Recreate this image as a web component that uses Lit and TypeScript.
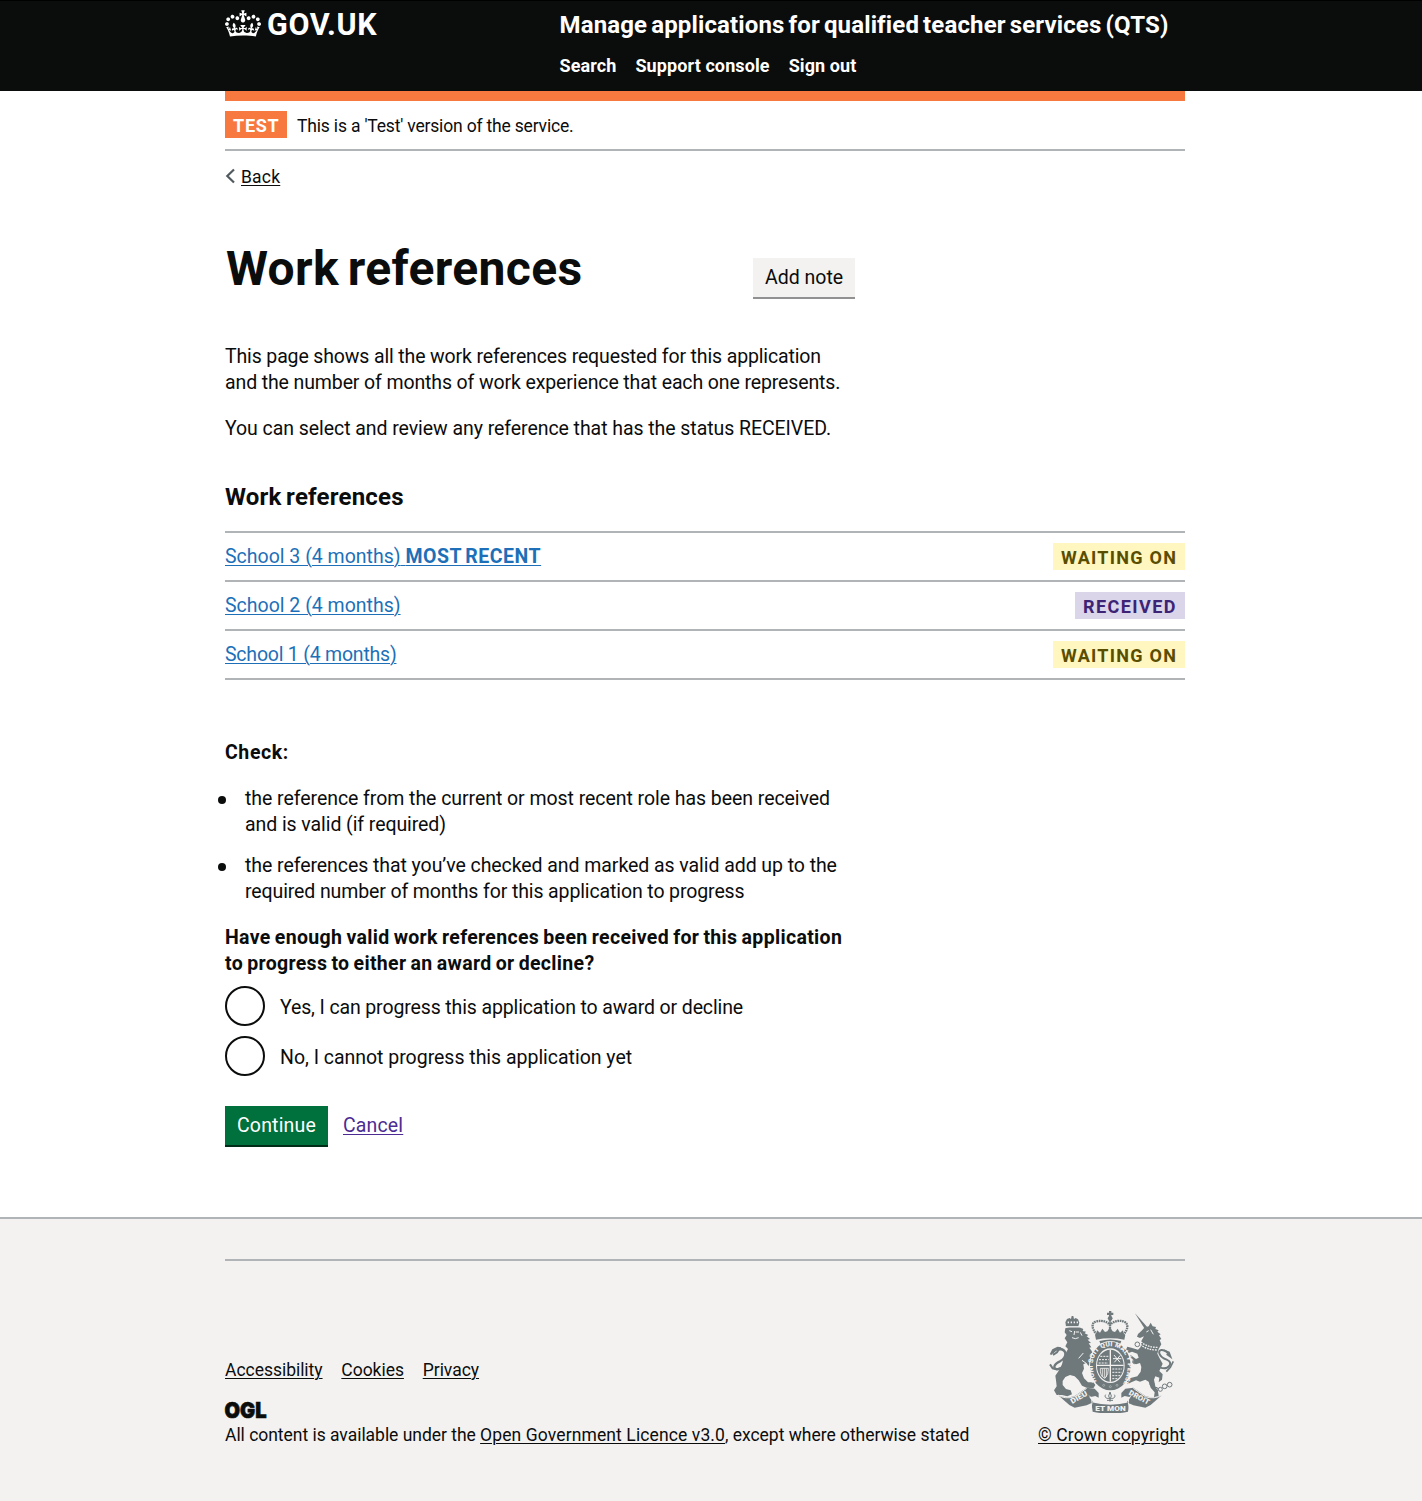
import { LitElement, html, svg, css } from "lit";
import { customElement } from "lit/decorators.js";

const crown = svg`<svg class="crown" viewBox="0 0 132 97" aria-hidden="true"><path fill="currentColor" fill-rule="evenodd" d="M25 30.2c3.5 1.5 7.7-.2 9.1-3.7 1.5-3.6-.2-7.8-3.9-9.2-3.6-1.4-7.6.3-9.1 3.9-1.4 3.5.3 7.5 3.9 9zM9 39.5c3.6 1.5 7.8-.2 9.2-3.7 1.5-3.6-.2-7.8-3.9-9.1-3.6-1.5-7.6.2-9.1 3.8-1.4 3.5.3 7.5 3.8 9zM4.4 57.2c3.5 1.5 7.7-.2 9.1-3.8 1.5-3.6-.2-7.7-3.9-9.1-3.5-1.5-7.6.3-9.1 3.8-1.4 3.5.3 7.6 3.9 9.1zm38.3-21.4c3.5 1.5 7.7-.2 9.1-3.8 1.5-3.6-.2-7.7-3.9-9.1-3.6-1.5-7.6.3-9.1 3.8-1.3 3.6.4 7.7 3.9 9.1zm64.4-5.6c-3.6 1.5-7.8-.2-9.1-3.7-1.5-3.6.2-7.8 3.8-9.2 3.6-1.4 7.7.3 9.2 3.9 1.3 3.5-.4 7.5-3.9 9zm15.9 9.3c-3.6 1.5-7.7-.2-9.1-3.7-1.5-3.6.2-7.8 3.7-9.1 3.6-1.5 7.7.2 9.2 3.8 1.5 3.5-.3 7.5-3.8 9zm4.7 17.7c-3.6 1.5-7.8-.2-9.2-3.8-1.5-3.6.2-7.7 3.9-9.1 3.6-1.5 7.7.3 9.2 3.8 1.3 3.5-.4 7.6-3.9 9.1zM89.3 35.8c-3.6 1.5-7.8-.2-9.2-3.8-1.4-3.6.2-7.7 3.9-9.1 3.6-1.5 7.7.3 9.2 3.8 1.4 3.6-.3 7.7-3.9 9.1zM69.7 17.7l8.9 4.7V9.3l-8.9 2.8c-.2-.3-.5-.6-.9-.9L72.4 0H59.6l3.5 11.2c-.3.3-.6.5-.9.9l-8.8-2.8v13.1l8.8-4.7c.3.3.6.7.9.9l-5 15.4v.1c-.2.8-.4 1.6-.4 2.4 0 4.1 3.1 7.5 7 8.1h.2c.3 0 .7.1 1 .1.4 0 .7 0 1-.1h.2c4-.6 7.1-4.1 7.1-8.1 0-.8-.1-1.7-.4-2.4V34l-5.1-15.4c.4-.2.7-.6 1-.9zM66 92.8c16.9 0 32.8 1.1 47.1 3.2 4-16.9 8.9-26.7 14-33.5l-9.6-3.4c1 4.9 1.1 7.2 0 10.2-1.5-1.4-3-4.3-4.2-8.7L108.6 76c2.8-2 5-3.2 7.5-3.3-4.4 9.4-10 11.9-13.6 11.2-4.3-.8-6.3-4.6-5.6-7.9 1-4.7 5.7-5.9 8-.5 4.3-8.7-3-11.4-7.6-8.8 7.1-7.2 7.9-13.5 2.1-21.1-8 6.1-8.1 12.3-4.5 20.8-4.7-5.4-12.1-2.5-9.5 6.2 3.4-5.2 7.9-2 7.2 3.1-.6 4.3-6.4 7.8-13.5 7.2-10.3-.9-10.9-8-11.2-13.8 2.5-.5 7.1 1.8 11 7.3L80.2 60c-4.1 4.4-8 5.3-12.3 5.4 1.4-4.4 8-11.6 8-11.6H55.5s6.4 7.2 7.9 11.6c-4.2-.1-8-1-12.3-5.4l1.4 16.4c3.9-5.5 8.5-7.7 10.9-7.3-.3 5.8-.9 12.8-11.1 13.8-7.2.6-12.9-2.9-13.5-7.2-.7-5 3.8-8.3 7.1-3.1 2.7-8.7-4.6-11.6-9.4-6.2 3.7-8.5 3.6-14.7-4.6-20.8-5.8 7.6-5 13.9 2.2 21.1-4.7-2.6-11.9.1-7.7 8.8 2.3-5.5 7.1-4.2 8.1.5.7 3.3-1.3 7.1-5.7 7.9-3.5.7-9-1.8-13.5-11.2 2.5.1 4.7 1.3 7.5 3.3l-4.7-15.4c-1.2 4.4-2.7 7.2-4.3 8.7-1.1-3-.9-5.3 0-10.2l-9.5 3.4c5 6.9 9.9 16.7 14 33.5 14.8-2.1 30.8-3.2 47.7-3.2z"/></svg>`;

const chevron = svg`<svg class="chevron" viewBox="0 0 12 16" aria-hidden="true"><path d="M9 1.5 2.300 8 9 14.500" fill="none" stroke="#505a5f" stroke-width="2.200"/></svg>`;

const arms = svg`<svg class="arms" viewBox="57 32 375 306" preserveAspectRatio="none" aria-hidden="true">
  <defs><path id="garter" d="M201 247C174 190 192 139 241 138C290 139 308 190 281 247"/></defs>
  <g class="ink">
    <path d="M237 32h7v5h6v7h-6v6h-7v-6h-6v-7h6z"/><circle cx="240.500" cy="54" r="7"/>
    <path d="M195 103q45-11 91 0l-3 15q-42-8-85 0z"/>
    <path d="M198 104l3-14 9 7 7-12 8 10 7-2 8-12 8 12 7 2 8-10 7 12 9-7 3 14z"/>
    <path d="M208 122q33-9 66 0l-3 8q-30-8-60 0z"/>
    <!-- lion -->
    <path d="M106 84L118 80L146 80L160 86L158 92L168 94L164 99L175 104L170 108L180 116L173 118L183 128L176 129L184 141L178 142L188 156L182 160L190 172L198 176L190 184L192 196L184 204L176 196L168 188L160 192L162 205L156 218L162 234L174 246L190 246L196 254L190 264L170 262L156 256L146 240L134 228L120 224L106 230L98 242L98 254L108 266L122 270L126 282L112 288L96 284L80 284L72 270L80 258L78 240L76 226L88 208L96 192L100 176L106 160L114 146L106 138L112 126L104 114L110 104L104 96z"/>
    <path d="M108 78l-2-12 5-10 8-3 4 3 2-9h5l2 9 5-3 7 4 4 10-3 11z"/>
    <!-- unicorn -->
    <path d="M315 39l36 40-7 6z"/>
    <path d="M343 82L356 78L362 67L368 78L378 80L376 86L386 90L382 94L392 102L387 105L394 116L389 119L394 132L386 146L382 160L390 176L398 190L392 204L388 212L398 222L396 238L386 246L388 232L376 228L372 238L376 258L384 272L386 288L372 290L374 276L362 262L356 244L346 238L330 244L318 240L304 246L292 252L289 244L302 233L322 228L332 214L334 200L330 188L318 192L308 186L312 180L300 172L302 164L318 176L326 172L322 160L306 154L296 158L288 148L292 139L304 142L324 148L332 140L334 122L342 108L330 113L321 109L324 101L334 92z"/>
    <!-- scroll -->
    <path d="M84 284q22 12 50 3l36-25 24 3 12 13 0 14-10-5-18 4 12 15-20 9-36 7-16-8-18-16z"/>
    <path d="M396 284q-22 12-50 3l-36-25-24 3-12 13 0 14 10-5 18 4-12 15 20 9 36 7 16-8 18-16z"/>
    <path d="M184 306q57 14 114 0l-4 28q-53 12-106 0z"/>
  </g>
  <g class="line">
    <path d="M201 103C184 85 183 66 200 63C219 59 233 65 240 74C249 63 268 58 282 64C297 70 294 88 280 103" stroke-width="7" stroke-dasharray="5 2"/>
    <path d="M240 59v34" stroke-width="7" stroke-dasharray="5 2"/>
    <path d="M92 206C61 210 73 190 90 183C113 171 111 146 87 146C74 147 69 153 67 160" stroke-width="7"/>
    <path d="M62 163l7-14 14-7 6 1-8 13-12 8M60 192l8 12 13 3 12-5" stroke-width="6"/>
    <path d="M391 202C417 210 432 186 410 178C388 170 381 151 394 149C406 148 415 158 418 166" stroke-width="6"/>
    <path d="M402 150l15 6 5 14-12-9M409 214l12-13 9-18" stroke-width="5"/>
    <g stroke-width="3"><circle cx="366" cy="251" r="6"/><circle cx="378" cy="267" r="6"/><circle cx="391" cy="267" r="6"/><circle cx="404" cy="258" r="7"/><circle cx="419" cy="253" r="7"/><circle cx="322" cy="132" r="7"/><circle cx="314" cy="184" r="6"/></g>
  </g>
  <ellipse cx="241" cy="197" rx="64" ry="75" class="gap"/>
  <ellipse cx="241" cy="197" rx="61" ry="73" class="ink"/>
  <ellipse cx="241" cy="196" rx="43" ry="52" class="gap"/>
  <ellipse cx="241" cy="196" rx="40" ry="48" class="ink"/>
  <g class="cut">
    <path d="M241 148v96M201 195h80" stroke-width="4"/>
    <path d="M211 168h25M207 178h29M206 188h28M247 206h29M247 216h28M247 226h24M247 235h16" stroke-width="3" stroke-dasharray="6 3"/>
    <path d="M252 164l18 22M271 165l-18 21M249 175h25" stroke-width="3"/>
    <path d="M211 204q-2 24 14 30 11-12 10-30zM217 205v24M223 205v27M229 205v25" stroke-width="2.500"/>
    <path d="M107 80h42" stroke-width="3"/><path d="M113 66h4M122 66h4M131 66h4M140 66h4" stroke-width="5"/>
    <path d="M118 91l8 3M137 95h10M134 92l-2 12M151 96l5 10M126 112l10 3 10-3M160 158l-14 16M170 190l-14-10" stroke-width="3"/>
    <path d="M331 132q18 17 50 17M333 125q20 17 52 16" stroke-width="4" stroke-dasharray="5 3"/>
    <path d="M349 95l7-4M362 88l8 14" stroke-width="3"/>
    <path d="M84 284q22 14 50 5l36-25M396 284q-22 14-50 5l-36-25" stroke-width="3"/>
    <path d="M178 286q10 6 8 20l-4 24M303 286q-10 6-8 20l4 24" stroke-width="3"/>
    <circle cx="221" cy="255" r="3"/><circle cx="241" cy="259" r="3"/><circle cx="261" cy="255" r="3"/>
  </g>
  <ellipse cx="240" cy="288" rx="17" ry="16" class="gap"/>
  <path d="M240 275l4 12-4 10-4-10zM227 283c-5 7 2 13 11 11M253 283c5 7-2 13-11 11M231 300h18M240 296v8" class="line" stroke-width="3"/>
  <g class="motto">
    <text font-size="20"><textPath href="#garter" startOffset="4" textLength="282">HONI SOIT QUI MAL Y PENSE</textPath></text>
    <text x="196" y="331" font-size="22" textLength="91" lengthAdjust="spacingAndGlyphs">ET MON</text>
    <text x="127" y="311" font-size="22" textLength="55" lengthAdjust="spacingAndGlyphs" transform="rotate(-30 127 311)">DIEU</text>
    <text x="295" y="282" font-size="22" textLength="67" lengthAdjust="spacingAndGlyphs" transform="rotate(28 295 282)">DROIT</text>
  </g>
</svg>`;

interface Reference { label: string; cls: string; recent?: boolean; status: string; tone: string }
const references: Reference[] = [
  { label: "School 3 (4 months)", cls: "", recent: true, status: "WAITING ON", tone: "yellow" },
  { label: "School 2 (4 months)", cls: "", status: "RECEIVED", tone: "purple" },
  { label: "School 1 (4 months)", cls: "tight", status: "WAITING ON", tone: "yellow" },
];

@customElement("app-root")
export class AppRoot extends LitElement {
  static styles = css`
    :host { display: block; min-height: 1501px; background: #fff; color: #0b0c0c; font-family: Roboto, "Liberation Sans", sans-serif; font-size: 19.5px; line-height: 26px; }
    * { box-sizing: border-box; }
    p, h1, h2, ul { margin: 0; padding: 0; }
    a { color: inherit; text-decoration: underline; text-decoration-thickness: 1px; text-underline-offset: 2px; }
    .wrap { width: 960px; margin-left: 225px; }
    .line-text { display: block; white-space: pre; }

    header { height: 91px; background: #0b0c0c; border-top: 1px solid #000; color: #fff; font-weight: 700; }
    .head { display: flex; }
    .brand { display: flex; width: 334.5px; padding-top: 9px; }
    .crown { width: 36px; height: 27px; margin-right: 6px; flex: none; }
    .brand-name { font-size: 30.5px; line-height: 30px; letter-spacing: .65px; }
    .service { font-size: 24px; line-height: 30px; padding-top: 9px; letter-spacing: .14px; word-spacing: -2.1px; white-space: nowrap; }
    nav { display: flex; gap: 19px; padding-top: 14px; font-size: 18px; line-height: 24px; letter-spacing: .1px; }
    nav a { text-decoration: none; }

    .phase { height: 60px; border-top: 10px solid #f7793f; border-bottom: 2px solid #b1b4b6; display: flex; gap: 10px; padding-top: 10px; font-size: 17.5px; line-height: 28px; letter-spacing: -.18px; }
    .tag { display: block; height: 27px; padding: 0 8px; font-size: 18px; line-height: 30px; font-weight: 700; letter-spacing: 1.28px; white-space: nowrap; }
    .orange { background: #f7793f; color: #fff; letter-spacing: .75px; width: 62px; line-height: 29px; }
    .phase p { padding-top: 1px; }
    .yellow { background: #fff7bf; color: #594d00; width: 132px; }
    .purple { background: #dbd5e9; color: #3d2375; width: 110px; letter-spacing: 1.45px; }
    .back { display: flex; gap: 4px; height: 26px; margin-top: 13px; font-size: 17.5px; line-height: 26px; letter-spacing: .2px; }
    .chevron { width: 12px; height: 16px; margin-top: 4px; }

    .title { display: flex; justify-content: space-between; width: 630px; margin-top: 50px; }
    h1 { font-size: 48px; line-height: 58px; letter-spacing: .35px; word-spacing: -3.5px; padding-left: 1px; }
    .button { display: block; height: 41px; padding: 0 12px; line-height: 39px; text-decoration: none; white-space: nowrap; }
    .grey { width: 102px; margin-top: 18px; background: #f3f2f1; border-bottom: 2px solid #929191; }
    .green { width: 103px; background: #00703c; color: #fff; border-bottom: 2px solid #002d18; letter-spacing: .18px; }

    .intro { margin-top: 45px; }
    .l1 { letter-spacing: -.138px; } .l2 { letter-spacing: -.12px; } .l3 { letter-spacing: -.06px; margin-top: 20px; }
    h2 { font-size: 24px; line-height: 30px; letter-spacing: .21px; word-spacing: -1.7px; margin-top: 40px; }
    .list { margin-top: 19px; border-top: 2px solid #b1b4b6; list-style: none; }
    .row { display: flex; justify-content: space-between; height: 49px; padding: 10px 0; border-bottom: 2px solid #b1b4b6; }
    .row a { color: #1d70b8; white-space: pre; padding-top: 1px; }
    .row b { letter-spacing: .5px; word-spacing: -1.5px; }
    .row .tight { letter-spacing: -.215px; }

    .check { margin-top: 60px; font-weight: 700; letter-spacing: .6px; }
    .bullets { list-style: none; margin-top: 20px; }
    .bullets li { position: relative; padding-left: 20px; margin-bottom: 15px; }
    .bullets li::before { content: ""; position: absolute; left: -7px; top: 10px; width: 8px; height: 8px; border-radius: 50%; background: #0b0c0c; }
    .b1 { letter-spacing: -.055px; } .b2 { letter-spacing: -.078px; } .b3 { letter-spacing: -.065px; } .b4 { letter-spacing: -.117px; }
    .legend { margin-top: 20px; font-weight: 700; letter-spacing: .325px; word-spacing: -1px; }
    .radios { display: grid; gap: 10px; margin-top: 9px; }
    .radio { display: flex; gap: 15px; line-height: 43px; height: 40px; }
    .circle { width: 40px; height: 40px; border: 2px solid #0b0c0c; border-radius: 50%; }
    .yes { letter-spacing: -.13px; } .no { letter-spacing: -.02px; }
    .actions { display: flex; gap: 15px; margin-top: 30px; line-height: 39px; }
    .cancel { color: #4c2c92; letter-spacing: .15px; }

    footer { height: 284px; margin-top: 70px; background: #f3f2f1; border-top: 2px solid #b1b4b6; font-size: 17.5px; }
    .rule { height: 2px; background: #b1b4b6; }
    footer .wrap { padding-top: 40px; }
    .foot { display: flex; justify-content: space-between; align-items: flex-end; height: 187px; }
    .links { display: flex; gap: 18.8px; letter-spacing: -.03px; }
    .ogl { display: block; width: 42px; height: 18px; margin-top: 18px; overflow: visible; }
    .licence { white-space: nowrap; margin-top: 3px; letter-spacing: -.03px; }
    .licence a { letter-spacing: .11px; }
    .copy { width: 147px; letter-spacing: .13px; white-space: nowrap; }
    .arms { display: block; width: 125px; height: 102px; margin: 0 0 9px 11px; }
    .ink { fill: #6f797c; } .gap { fill: #f3f2f1; }
    .line { fill: none; stroke: #6f797c; } .cut { fill: none; stroke: #f3f2f1; }
    .motto { fill: #f3f2f1; font-weight: 900; font-family: Roboto, sans-serif; }
  `;

  render() {
    return html`
      <header><div class="wrap head">
        <div class="brand">${crown}<span class="brand-name">GOV.UK</span></div>
        <div><div class="service">Manage applications for qualified teacher services (QTS)</div>
          <nav><a>Search</a><a>Support console</a><a>Sign out</a></nav></div>
      </div></header>
      <div class="wrap">
        <div class="phase"><strong class="tag orange">TEST</strong><p>This is a 'Test' version of the service.</p></div>
        <div class="back">${chevron}<a href="#">Back</a></div>
        <main>
          <div class="title"><h1>Work references</h1><a class="button grey">Add note</a></div>
          <p class="intro"><span class="line-text l1">This page shows all the work references requested for this application</span><span class="line-text l2">and the number of months of work experience that each one represents.</span></p>
          <p class="line-text l3">You can select and review any reference that has the status RECEIVED.</p>
          <h2>Work references</h2>
          <ul class="list">${references.map(r => html`<li class="row"><a class=${r.cls} href="#">${r.label}${r.recent ? html` <b>MOST RECENT</b>` : ""}</a><strong class="tag ${r.tone}">${r.status}</strong></li>`)}</ul>
          <p class="check">Check:</p>
          <ul class="bullets">
            <li><span class="line-text b1">the reference from the current or most recent role has been received</span><span class="line-text b2">and is valid (if required)</span></li>
            <li><span class="line-text b3">the references that you’ve checked and marked as valid add up to the</span><span class="line-text b4">required number of months for this application to progress</span></li>
          </ul>
          <p class="legend"><span class="line-text">Have enough valid work references been received for this application</span><span class="line-text">to progress to either an award or decline?</span></p>
          <div class="radios">
            <label class="radio"><span class="circle"></span><span class="yes">Yes, I can progress this application to award or decline</span></label>
            <label class="radio"><span class="circle"></span><span class="no">No, I cannot progress this application yet</span></label>
          </div>
          <div class="actions"><a class="button green">Continue</a><a class="cancel" href="#">Cancel</a></div>
        </main>
      </div>
      <footer><div class="wrap">
        <div class="rule"></div>
        <div class="foot">
          <div>
            <div class="links"><a href="#">Accessibility</a><a href="#">Cookies</a><a href="#">Privacy</a></div>
            <svg class="ogl" viewBox="0 0 42 18"><text x="-0.500" y="16.500" font-family="Inter, sans-serif" font-size="22" font-weight="900" textLength="42" lengthAdjust="spacingAndGlyphs" fill="#0b0c0c" stroke="#0b0c0c" stroke-width=".7">OGL</text></svg>
            <p class="licence">All content is available under the <a href="#">Open Government Licence v3.0</a>, except where otherwise stated</p>
          </div>
          <div class="copy">${arms}<a href="#">© Crown copyright</a></div>
        </div>
      </div></footer>`;
  }
}
